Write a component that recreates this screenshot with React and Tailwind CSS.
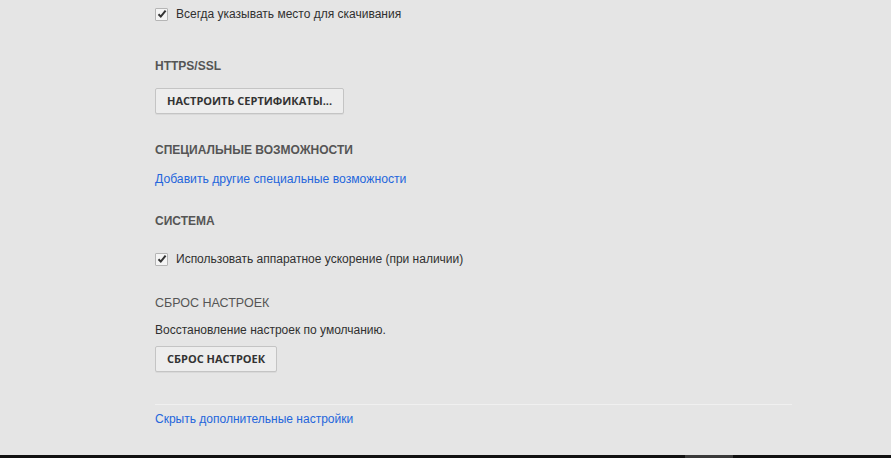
export default function App() {
  return (
    <div className="flex h-screen flex-col bg-[#e5e5e5] font-['Liberation_Sans',Arial,sans-serif] text-[12px] text-[#303030]">
      <div className="flex-1 pl-[155px]">
        <div className="w-[637px]">
          <CheckRow label="Всегда указывать место для скачивания" />

          <Heading className="mt-[28px]">HTTPS/SSL</Heading>
          <Button className="mt-[12px]">Настроить сертификаты...</Button>

          <Heading className="mt-[26px]">Специальные возможности</Heading>
          <a href="#" className="mt-[9px] flex h-[20px] items-center text-[12.2px] text-[#2466dc]">
            Добавить другие специальные возможности
          </a>

          <Heading className="mt-[22px]">Система</Heading>
          <CheckRow className="mt-[14px]" label="Использовать аппаратное ускорение (при наличии)" />

          <Heading className="mt-[20px] text-[12.5px] font-normal">Сброс настроек</Heading>
          <div className="mt-[7px] flex h-[20px] items-center">Восстановление настроек по умолчанию.</div>
          <Button className="mt-[6px]">Сброс настроек</Button>

          <div className="mt-[32px] h-px bg-[#f0f0f0]" />
          <a href="#" className="mt-[4px] flex h-[20px] items-center text-[#2466dc]">
            Скрыть дополнительные настройки
          </a>
        </div>
      </div>
      <div className="flex h-[3px] bg-[#111111]">
        <div className="ml-[685px] w-[48px] bg-[#3a3a3a]" />
      </div>
    </div>
  );
}

function Heading({ children, className = '' }) {
  return (
    <div className={`flex h-[20px] items-center font-bold uppercase text-[#555555] ${className}`}>
      {children}
    </div>
  );
}

function Button({ children, className = '' }) {
  return (
    <button
      type="button"
      className={`flex h-[26px] items-center rounded-[2px] border border-[#c4c4c4] bg-[#ededed] px-[11px] font-['Open_Sans',sans-serif] text-[11px] font-bold uppercase text-[#333333] shadow-[0_1px_0_rgba(0,0,0,0.05)] ${className}`}
    >
      {children}
    </button>
  );
}

function CheckRow({ label, className = '' }) {
  return (
    <div className={`flex h-[28px] items-center gap-[8px] ${className}`}>
      <span className="flex h-[13px] w-[13px] items-center justify-center rounded-[1px] border border-[#b5b5b5] bg-[#f4f4f4]">
        <svg width="10" height="10" viewBox="0 0 10 10">
          <path d="M1.5 5.2 L3.8 7.6 L8.6 1.6" fill="none" stroke="#333" strokeWidth="2" />
        </svg>
      </span>
      <span>{label}</span>
    </div>
  );
}
